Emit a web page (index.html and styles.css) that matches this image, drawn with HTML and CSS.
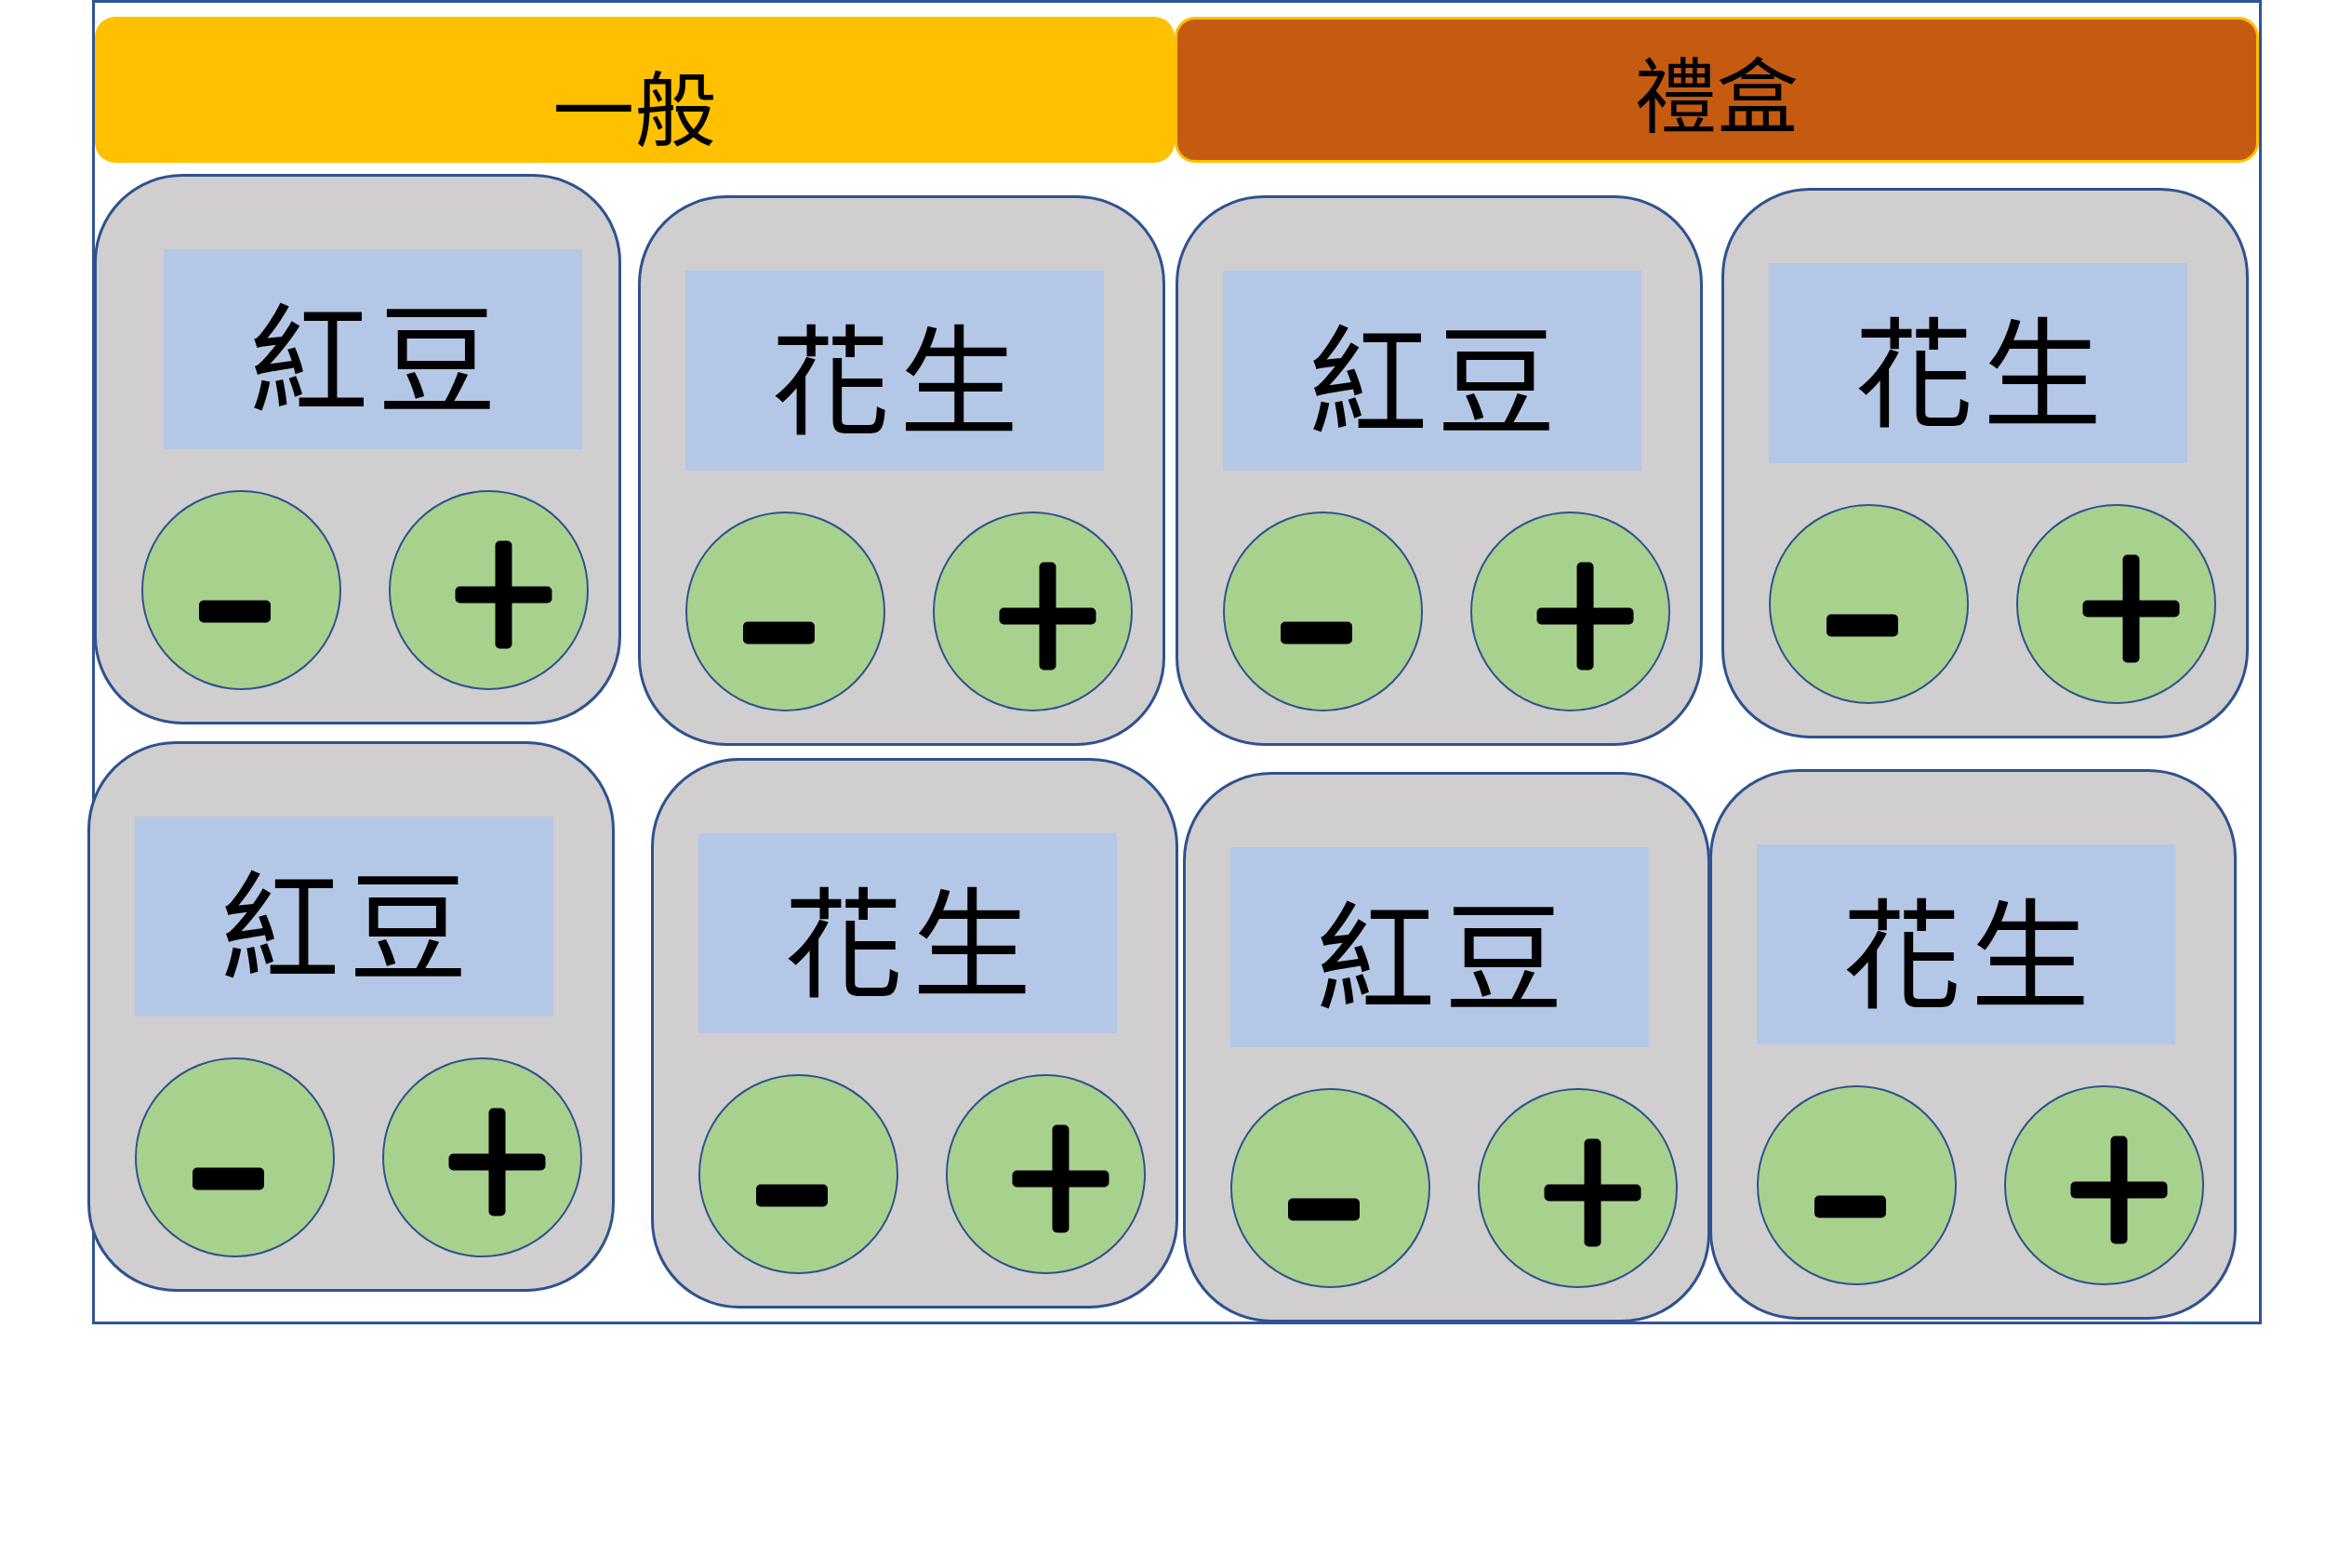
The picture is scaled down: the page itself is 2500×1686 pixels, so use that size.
FILE: index.html
```html
<!DOCTYPE html>
<html lang="zh-Hant">
<head>
    <meta charset="UTF-8">
    <meta name="viewport" content="width=device-width, initial-scale=1.0">
    <title>點餐</title>
    <link rel="stylesheet" href="styles.css">
</head>
<body>
    <!-- shared icons -->
    <svg class="icon-defs" width="0" height="0" aria-hidden="true">
        <symbol id="icon-minus" viewBox="0 0 211 211">
            <rect x="60" y="116.5" width="77" height="24" rx="5"/>
        </symbol>
        <symbol id="icon-plus" viewBox="0 0 211 211">
            <rect x="112.5" y="52.5" width="18" height="116" rx="5"/>
            <rect x="69.5" y="101.5" width="104" height="18" rx="5"/>
        </symbol>
    </svg>

    <div class="frame">
        <div class="tabs">
            <div class="tab tab-normal">一般</div>
            <div class="tab tab-gift">禮盒</div>
        </div>

        <div class="cards">
            <div class="card">
                <div class="label">紅豆</div>
                <div class="controls">
                    <button type="button" class="btn"><svg><use href="#icon-minus"/></svg></button>
                    <button type="button" class="btn"><svg><use href="#icon-plus"/></svg></button>
                </div>
            </div>
            <div class="card">
                <div class="label">花生</div>
                <div class="controls">
                    <button type="button" class="btn"><svg><use href="#icon-minus"/></svg></button>
                    <button type="button" class="btn"><svg><use href="#icon-plus"/></svg></button>
                </div>
            </div>
            <div class="card">
                <div class="label">紅豆</div>
                <div class="controls">
                    <button type="button" class="btn"><svg><use href="#icon-minus"/></svg></button>
                    <button type="button" class="btn"><svg><use href="#icon-plus"/></svg></button>
                </div>
            </div>
            <div class="card">
                <div class="label">花生</div>
                <div class="controls">
                    <button type="button" class="btn"><svg><use href="#icon-minus"/></svg></button>
                    <button type="button" class="btn"><svg><use href="#icon-plus"/></svg></button>
                </div>
            </div>
            <div class="card">
                <div class="label">紅豆</div>
                <div class="controls">
                    <button type="button" class="btn"><svg><use href="#icon-minus"/></svg></button>
                    <button type="button" class="btn"><svg><use href="#icon-plus"/></svg></button>
                </div>
            </div>
            <div class="card">
                <div class="label">花生</div>
                <div class="controls">
                    <button type="button" class="btn"><svg><use href="#icon-minus"/></svg></button>
                    <button type="button" class="btn"><svg><use href="#icon-plus"/></svg></button>
                </div>
            </div>
            <div class="card">
                <div class="label">紅豆</div>
                <div class="controls">
                    <button type="button" class="btn"><svg><use href="#icon-minus"/></svg></button>
                    <button type="button" class="btn"><svg><use href="#icon-plus"/></svg></button>
                </div>
            </div>
            <div class="card">
                <div class="label">花生</div>
                <div class="controls">
                    <button type="button" class="btn"><svg><use href="#icon-minus"/></svg></button>
                    <button type="button" class="btn"><svg><use href="#icon-plus"/></svg></button>
                </div>
            </div>
        </div>
    </div>
</body>
</html>
```

FILE: styles.css
```css
* {
    box-sizing: border-box;
    margin: 0;
    padding: 0;
}

body {
    background: #fff;
    font-family: "Noto Sans CJK TC", "Noto Sans CJK SC", sans-serif;
    color: #000;
}

.icon-defs {
    position: absolute;
    width: 0;
    height: 0;
}

.frame {
    margin-left: 99px;
    width: 2333px;
    height: 1424px;
    border: 3px solid #2f5597;
}

/* top category bar */
.tabs {
    display: flex;
    margin-top: 15px;
    height: 157px;
}

.tab {
    flex: 1;
    display: flex;
    justify-content: center;
    align-items: center;
    border-radius: 22px;
    font-size: 88px;
    line-height: 1;
}

.tab-normal {
    background: #ffc000;
    padding-top: 30px; /* text sits low in the original */
}

.tab-gift {
    background: #c55a11;
    border: 3px solid #ffc000;
}

/* product cards */
.cards {
    display: grid;
    grid-template-columns: repeat(4, 567px);
    grid-template-rows: 610px auto;
    column-gap: 16px;
    align-items: start;
    margin-top: 12px;
    margin-left: -6px;
}

.card {
    width: 567px;
    height: 592px;
    padding: 78px 0 0 48px;
    background: #d0cece;
    border: 3px solid #2f528f;
    border-radius: 95px;
}

/* the cards were dropped by hand, nudge them to match */
.card:nth-child(1) { margin-left: 5px; }
.card:nth-child(2) { margin: 23px 0 0 7px; }
.card:nth-child(3) { margin: 23px 0 0 2px; }
.card:nth-child(4) { margin: 15px 0 0 6px; }
.card:nth-child(5) { margin-left: -2px; }
.card:nth-child(6) { margin: 18px 0 0 21px; }
.card:nth-child(7) { margin: 33px 0 0 10px; }
.card:nth-child(8) { margin: 30px 0 0 -7px; }

.card:nth-child(1) .label {
    margin-left: 24px;
}

.label {
    width: 450px;
    height: 215px;
    display: flex;
    justify-content: center;
    align-items: center;
    background: #b4c7e7;
    font-size: 128px;
    line-height: 1;
    letter-spacing: 10px;
    padding-left: 10px;
    padding-top: 6px;
}

.controls {
    display: flex;
    gap: 51px;
    margin-top: 44px;
}

.btn {
    width: 215px;
    height: 215px;
    border-radius: 50%;
    border: 2px solid #2f528f;
    background: #a9d18e;
    display: flex;
    cursor: pointer;
}

.btn svg {
    width: 100%;
    height: 100%;
    fill: #000;
}
```
